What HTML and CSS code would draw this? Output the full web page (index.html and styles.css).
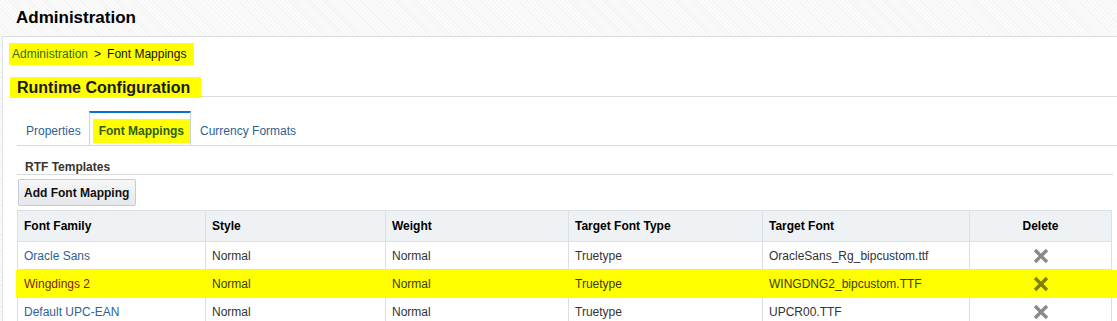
FILE: index.html
```html
<!DOCTYPE html>
<html lang="en">
<head>
  <meta charset="UTF-8" />
  <title>Administration - Font Mappings</title>
  <link rel="stylesheet" href="styles.css">
</head>
<body>
  <div class="top-bar">Administration</div>

  <div class="panel">
    <!-- breadcrumb -->
    <div class="crumbs"><a href="#">Administration</a><span class="sep">&gt;</span>Font Mappings</div>

    <div class="section-head"><span class="hl">Runtime Configuration</span></div>

    <div class="content">
      <div class="tabs">
        <div class="tab">Properties</div>
        <div class="tab active"><span class="hl">Font Mappings</span></div>
        <div class="tab">Currency Formats</div>
      </div>

      <div class="sub-head">RTF Templates</div>
      <button class="btn">Add Font Mapping</button>

      <table class="grid">
        <colgroup>
          <col style="width:188px"><col style="width:180px"><col style="width:183px">
          <col style="width:194px"><col style="width:207px"><col style="width:142px">
        </colgroup>
        <tr>
          <th>Font Family</th><th>Style</th><th>Weight</th>
          <th>Target Font Type</th><th>Target Font</th><th class="center">Delete</th>
        </tr>
        <tr>
          <td><a href="#">Oracle Sans</a></td><td>Normal</td><td>Normal</td>
          <td>Truetype</td><td>OracleSans_Rg_bipcustom.ttf</td>
          <td class="center"><svg class="del" viewBox="0 0 16 16"><path d="M2 2L14 14M14 2L2 14"/></svg></td>
        </tr>
        <tr class="marked">
          <td><a href="#">Wingdings 2</a></td><td>Normal</td><td>Normal</td>
          <td>Truetype</td><td>WINGDNG2_bipcustom.TTF</td>
          <td class="center"><svg class="del" viewBox="0 0 16 16"><path d="M2 2L14 14M14 2L2 14"/></svg></td>
        </tr>
        <tr>
          <td><a href="#">Default UPC-EAN</a></td><td>Normal</td><td>Normal</td>
          <td>Truetype</td><td>UPCR00.TTF</td>
          <td class="center"><svg class="del" viewBox="0 0 16 16"><path d="M2 2L14 14M14 2L2 14"/></svg></td>
        </tr>
      </table>
    </div>
  </div>
</body>
</html>
```

FILE: styles.css
```css
* { box-sizing: border-box; }
body {
  margin: 0;
  font-family: 'Liberation Sans', Arial, sans-serif;
  font-size: 12px;
  color: #333;
  background: repeating-linear-gradient(45deg, #f3f3f3 0 1px, #fbfbfb 1px 3px);
  overflow: hidden;
}
a { color: #2f6196; text-decoration: none; }

.top-bar {
  height: 36px;
  line-height: 36px;
  padding-left: 16px;
  font-size: 17px;
  font-weight: bold;
  color: #000;
}

.panel {
  margin-left: 2px;
  border-top: 1px solid #d9dde2;
  border-left: 1px solid #dfe3e7;
  background: #fff;
  padding-top: 6px;
  height: 300px;
}

/* Breadcrumb */
.crumbs {
  display: inline-block;
  margin-left: 6px;
  height: 22px;
  line-height: 22px;
  padding: 0 8px 0 3px;
  background: #ff0;
  color: #111;
}
.crumbs a { color: #386a0c; }
.crumbs .sep { padding: 0 6px; }

.section-head {
  margin: 12px 0 0 7px;
  height: 20px;
  border-bottom: 1px solid #d6dbe1;
}
.section-head .hl {
  display: inline-block;
  height: 21px;
  line-height: 21px;
  padding: 0 11px 0 7px;
  background: #ff0;
  font-size: 16px;
  font-weight: bold;
  color: #1a1a1a;
}

.content { margin-left: 14px; }

/* Tabs */
.tabs {
  display: flex;
  margin-top: 14px;
  height: 35px;
  border-bottom: 1px solid #d6dbe1;
}
.tab {
  padding: 7px 8px 0 9px;
  line-height: 27px;
  color: #2f6196;
}
.tab.active {
  border-top: 2px solid #0572ce;
  border-left: 1px solid #cbd2d9;
  border-right: 1px solid #cbd2d9;
  padding: 6px 0 0 3px;
}
.tab.active .hl {
  display: block;
  height: 24px;
  line-height: 24px;
  padding: 0 6px 0 6px;
  background: #ff0;
  font-weight: bold;
  color: #2f5d12;
}

.sub-head {
  margin-right: 4px;
  padding: 14px 0 0 8px;
  height: 29px;
  line-height: 14px;
  border-bottom: 1px solid #d6dbe1;
  font-weight: bold;
  color: #3a3330;
}

.btn {
  display: block;
  margin: 4px 0 0 1px;
  height: 27px;
  padding: 0 6px 0 5px;
  border: 1px solid #c4cdd6;
  border-radius: 2px;
  background: linear-gradient(#f7f7f7, #e5e7e9);
  font-family: inherit;
  font-size: 12px;
  font-weight: bold;
  color: #111;
}

/* Table */
.grid {
  margin-top: 4px;
  width: 1094px;
  table-layout: fixed;
  border-collapse: collapse;
}
.grid th, .grid td {
  border: 1px solid #dadfe5;
  padding: 0 6px;
  text-align: left;
  white-space: nowrap;
}
.grid th {
  height: 31px;
  background: #eff2f5;
  color: #000;
}
.grid td { height: 28px; }
.grid .center { text-align: center; }

.del {
  width: 16px;
  height: 16px;
  vertical-align: middle;
  fill: none;
  stroke: #8a8a8a;
  stroke-width: 3.4;
}

/* highlighted row */
.marked td {
  background: #ff0;
  border-color: #ff0;
  color: #3d3d00;
}
.marked td:first-child { box-shadow: -2px 0 0 #ff0; }
.marked td:last-child { box-shadow: 6px 0 0 #ff0; }
.marked a { color: #7a2410; }
.marked .del { stroke: #7f7f00; }
```
